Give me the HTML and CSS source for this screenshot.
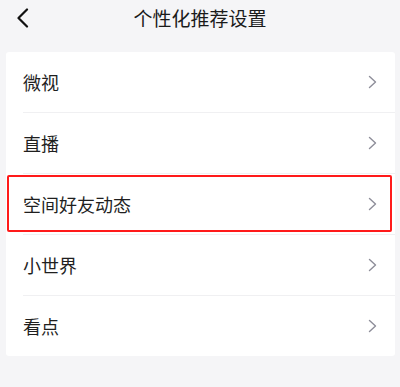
FILE: index.html
```html
<!DOCTYPE html>
<html lang="zh-CN">
<head>
<meta charset="utf-8">
<title>个性化推荐设置</title>
<link rel="stylesheet" href="styles.css">
</head>
<body>
<header class="topbar">
  <div class="back">
    <svg width="13" height="20" viewBox="0 0 13 20"><path d="M11 1.5 L2.5 10 L11 18.5" fill="none" stroke="#111" stroke-width="2.2" stroke-linecap="round" stroke-linejoin="round"/></svg>
  </div>
  <div class="title">个性化推荐设置</div>
  <div></div>
</header>
<main class="card">
  <div class="row"><span class="label">微视</span><svg class="chev" width="9" height="14" viewBox="0 0 9 14"><path d="M1.5 1.5 L7.5 7 L1.5 12.5" fill="none" stroke="#8d8d99" stroke-width="1.4" stroke-linecap="round" stroke-linejoin="round"/></svg></div>
  <div class="sep"></div>
  <div class="row"><span class="label">直播</span><svg class="chev" width="9" height="14" viewBox="0 0 9 14"><path d="M1.5 1.5 L7.5 7 L1.5 12.5" fill="none" stroke="#8d8d99" stroke-width="1.4" stroke-linecap="round" stroke-linejoin="round"/></svg></div>
  <div class="sep"></div>
  <div class="row highlight"><span class="label">空间好友动态</span><svg class="chev" width="9" height="14" viewBox="0 0 9 14"><path d="M1.5 1.5 L7.5 7 L1.5 12.5" fill="none" stroke="#8d8d99" stroke-width="1.4" stroke-linecap="round" stroke-linejoin="round"/></svg></div>
  <div class="sep"></div>
  <div class="row"><span class="label">小世界</span><svg class="chev" width="9" height="14" viewBox="0 0 9 14"><path d="M1.5 1.5 L7.5 7 L1.5 12.5" fill="none" stroke="#8d8d99" stroke-width="1.4" stroke-linecap="round" stroke-linejoin="round"/></svg></div>
  <div class="sep"></div>
  <div class="row"><span class="label">看点</span><svg class="chev" width="9" height="14" viewBox="0 0 9 14"><path d="M1.5 1.5 L7.5 7 L1.5 12.5" fill="none" stroke="#8d8d99" stroke-width="1.4" stroke-linecap="round" stroke-linejoin="round"/></svg></div>
</main>
</body>
</html>
```
FILE: styles.css
```css
html, body {
  margin: 0;
  padding: 0;
}
body {
  background: #f5f5f7;
  font-family: "Noto Sans CJK SC", "Noto Sans", sans-serif;
  color: #1f1f1f;
  width: 400px;
  height: 387px;
  overflow: hidden;
}
.topbar {
  display: grid;
  grid-template-columns: 1fr auto 1fr;
  align-items: center;
  height: 35px;
}
.back {
  display: flex;
  align-items: center;
  padding-left: 16px;
  padding-top: 1px;
}
.back svg {
  display: block;
}
.title {
  font-size: 19px;
  line-height: 35px;
  color: #1a1a1a;
}
.card {
  display: block;
  margin: 17px 5px 0 6px;
  background: #fff;
  border-radius: 3px;
}
.row {
  position: relative;
  display: flex;
  align-items: center;
  justify-content: space-between;
  height: 60px;
  padding: 0 18px 0 17px;
}
.label {
  font-size: 18px;
  line-height: 24px;
  color: #1f1f1f;
}
.chev {
  display: block;
}
.sep {
  height: 1px;
  margin-left: 17px;
  background: #f0f0f2;
}
.highlight::after {
  content: "";
  position: absolute;
  top: 1px;
  left: 1px;
  right: 3px;
  bottom: 2px;
  border: 2px solid #ff1a1a;
  border-radius: 2px;
  pointer-events: none;
}
```
